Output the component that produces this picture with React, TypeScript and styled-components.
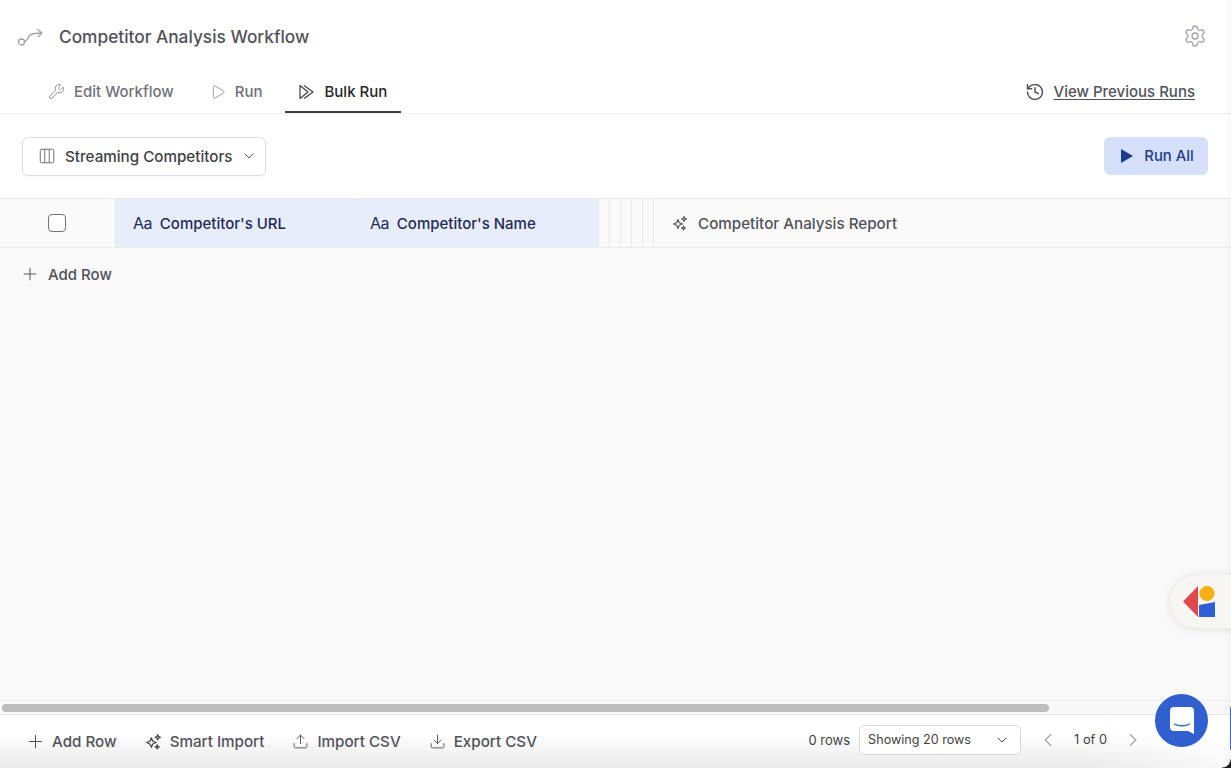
import React from "react";
import styled, { createGlobalStyle } from "styled-components";
import { ChevronDown, ChevronLeft, ChevronRight, Columns3, Download, History, Play, Plus, Settings, Upload, Wrench } from "lucide-react";

const GlobalStyle = createGlobalStyle`
  html, body { margin: 0; padding: 0; height: 100%; background: #fff; }
  body { font-family: "Inter", "Liberation Sans", sans-serif; overflow: hidden; }
  #root { height: 100%; }
`;

const Page = styled.div`
  position: relative;
  height: 768px;
  display: flex;
  flex-direction: column;
  overflow: hidden;
  background: #fff;
`;

const TitleRow = styled.div`
  height: 70px;
  flex: none;
  box-sizing: border-box;
  display: flex;
  align-items: center;
  padding: 2px 24px 0 17px;
  gap: 15px;
  color: #52525b;
`;

const Title = styled.h1`
  margin: 0;
  flex: 1;
  font-size: 17.3px;
  font-weight: 500;
  color: #52525b;
`;

const TabRow = styled.div`
  height: 44px;
  flex: none;
  box-sizing: border-box;
  display: flex;
  align-items: stretch;
  padding: 0 36px 0 34.5px;
  border-bottom: 1px solid #efefef;
`;

const Tab = styled.div<{ $active?: boolean }>`
  display: flex;
  align-items: center;
  gap: 9px;
  height: 43px;
  padding: 2px 13.5px 0;
  box-sizing: border-box;
  font-size: 15px;
  font-weight: 500;
  color: ${(p) => (p.$active ? "#27272a" : "#71717a")};
  border-bottom: 2px solid ${(p) => (p.$active ? "#3f3f46" : "transparent")};
  margin-right: ${(p) => (p.$active ? "0" : "9px")};
`;

const PreviousRuns = styled.div`
  margin-left: auto;
  display: flex;
  align-items: center;
  gap: 9px;
  font-size: 15px;
  font-weight: 500;
  color: #52525b;

  span {
    text-decoration: underline;
    text-underline-offset: 2px;
  }
`;

const Toolbar = styled.div`
  height: 84px;
  flex: none;
  display: flex;
  align-items: center;
  justify-content: space-between;
  padding: 0 23px 0 22px;
`;

const SetPicker = styled.div`
  width: 244px;
  height: 39px;
  box-sizing: border-box;
  display: flex;
  align-items: center;
  padding: 0 8px 0 15px;
  border: 1px solid #dcdcde;
  border-radius: 6px;
  box-shadow: 0 1px 2px rgba(0, 0, 0, 0.04);
  font-size: 15.2px;
  font-weight: 500;
  color: #3f3f46;

  span {
    flex: 1;
    margin-left: 9px;
    white-space: nowrap;
  }
`;

const RunAll = styled.button`
  width: 104px;
  height: 38px;
  display: flex;
  align-items: center;
  justify-content: center;
  gap: 11px;
  padding: 0 0 0 3px;
  border: 0;
  border-radius: 6px;
  background: #d4e0f9;
  color: #1e3a8a;
  font: 500 14.8px "Inter", "Liberation Sans", sans-serif;
`;

const HeaderRow = styled.div`
  height: 50px;
  flex: none;
  box-sizing: border-box;
  display: flex;
  background: #fafafa;
  border-top: 1px solid #e9e9ea;
  border-bottom: 1px solid #ededee;
`;

const CheckCell = styled.div`
  width: 115px;
  flex: none;
  box-sizing: border-box;
  padding-right: 1px;
  display: flex;
  align-items: center;
  justify-content: center;
`;

const Checkbox = styled.div`
  width: 18px;
  height: 18px;
  box-sizing: border-box;
  background: #fff;
  border: 1px solid #71717a;
  border-radius: 4px;
`;

const ColumnCell = styled.div<{ $width: number }>`
  width: ${(p) => p.$width}px;
  flex: none;
  box-sizing: border-box;
  display: flex;
  align-items: center;
  gap: 8px;
  padding-left: 17px;
  background: #e8eef9;
  border-left: 1px solid #e2e7f1;
  color: #1e2a5a;
  font-size: 15px;
  font-weight: 500;
`;

const TypeMark = styled.span`
  font-size: 16px;
  font-weight: 400;
  letter-spacing: -0.6px;
`;

const Sliver = styled.div`
  width: 11px;
  flex: none;
  box-sizing: border-box;
  border-left: 1px solid #e8e8ea;
`;

const ReportCell = styled.div`
  flex: 1;
  display: flex;
  align-items: center;
  gap: 10px;
  padding-left: 18px;
  border-left: 1px solid #e8e8ea;
  color: #52525b;
  font-size: 15.2px;
  font-weight: 500;
`;

const GridBody = styled.div`
  flex: 1;
  background: #f9f9f9;
`;

const InlineAdd = styled.div`
  height: 52px;
  display: flex;
  align-items: center;
  gap: 8px;
  padding-left: 20px;
  color: #52525b;
  font-size: 15px;
  font-weight: 500;
`;

const ScrollTrack = styled.div`
  height: 15px;
  flex: none;
  box-sizing: border-box;
  padding: 3px 2px;
  background: #f8f8f8;
  border-top: 1px solid #eeeeee;
  border-bottom: 1px solid #e8e8e8;
`;

const ScrollThumb = styled.div`
  width: 1047px;
  height: 8px;
  border-radius: 4px;
  background: #bdbdbd;
`;

const Footer = styled.div`
  height: 53px;
  flex: none;
  box-sizing: border-box;
  display: flex;
  align-items: center;
  padding: 0 87px 0 25px;
  background:
    linear-gradient(90deg, rgba(255, 255, 255, 0) 88%, rgba(255, 255, 255, 0.75) 100%),
    linear-gradient(#fff 0%, #fff 35%, #e9e9e9 100%);
`;

const FooterAction = styled.div<{ $gap?: number }>`
  display: flex;
  align-items: center;
  gap: ${(p) => p.$gap ?? 8}px;
  margin-right: 28px;
  color: #52525b;
  font-size: 15.2px;
  font-weight: 500;
`;

const PagingGroup = styled.div`
  margin-left: auto;
  display: flex;
  align-items: center;
  padding-bottom: 4px;
`;

const RowCount = styled.div`
  font-size: 13px;
  color: #3f3f46;
`;

const PageSize = styled.div`
  width: 162px;
  height: 30px;
  box-sizing: border-box;
  margin-left: 9px;
  display: flex;
  align-items: center;
  justify-content: space-between;
  padding: 0 10px 0 8px;
  background: #fff;
  border: 1px solid #d8d8da;
  border-radius: 5px;
  font-size: 12.6px;
  color: #3f3f46;
`;

const Pager = styled.div`
  display: flex;
  align-items: center;
  gap: 15px;
  margin-left: 16px;
  font-size: 12.8px;
  color: #3f3f46;
`;

const ChatButton = styled.div`
  position: absolute;
  left: 1155px;
  top: 694px;
  width: 53px;
  height: 53px;
  display: flex;
  align-items: center;
  justify-content: center;
  border-radius: 50%;
  background: #3060d0;
`;

const Launcher = styled.div`
  position: absolute;
  left: 1170px;
  top: 575px;
  width: 70px;
  height: 53px;
  display: flex;
  align-items: center;
  padding-left: 13px;
  box-sizing: border-box;
  border-radius: 27px 0 0 27px;
  background: #f7f6f3;
  box-shadow: 0 1px 8px rgba(0, 0, 0, 0.1);
`;

const EdgeFade = styled.div`
  position: absolute;
  top: 0;
  right: 0;
  bottom: 0;
  width: 8px;
  background: linear-gradient(90deg, rgba(0, 0, 0, 0), rgba(0, 0, 0, 0.025));
  pointer-events: none;
`;

const EdgeAccent = styled.div`
  position: absolute;
  top: 707px;
  right: 0;
  width: 1px;
  height: 43px;
  background: #3f68cf;
`;

const WindowCorner = styled.div`
  position: absolute;
  right: 0;
  bottom: 0;
  width: 9px;
  height: 9px;
  background: radial-gradient(circle at 0 0, rgba(0, 0, 0, 0) 8px, #1f1f1f 9px);
`;

const RouteIcon = () => (
  <svg width="27" height="24" viewBox="0 0 27 24" fill="none" stroke="#a1a1aa" strokeWidth="1.3" strokeLinecap="round" strokeLinejoin="round">
    <circle cx="4.5" cy="18" r="3" />
    <path d="M7.5 17.5c3.5 0 3.5-7 7.5-7.5 3-.4 4-.5 9-1" />
    <path d="M20.5 5.5 25 9l-3.5 3.5" />
  </svg>
);

const BulkPlay = () => (
  <svg width="17" height="16" viewBox="0 0 17 16" fill="none" stroke="#3f3f46" strokeWidth="1.2" strokeLinejoin="round">
    <path d="M2 1.5v13L10 8z" />
    <path d="M6 1.5 15 8l-9 6.5" />
  </svg>
);

const SolidPlay = () => (
  <svg width="12" height="14" viewBox="0 0 12 14">
    <path d="M0 0l12 7-12 7z" fill="#1e3a8a" />
  </svg>
);

const SparkIcon = ({ size = 16, color = "#52525b" }: { size?: number; color?: string }) => (
  <svg width={size} height={size} viewBox="0 0 16 16" fill="none" stroke={color} strokeWidth="1.1" strokeLinejoin="round">
    <path d="M6 4.5 7.3 7.7 10.5 9 7.3 10.3 6 13.5 4.7 10.3 1.5 9 4.7 7.7z" />
    <path d="M12 1.5 12.7 3.3 14.5 4 12.7 4.7 12 6.5 11.3 4.7 9.5 4 11.3 3.3z" />
    <path d="M11.5 11 12.1 12.4 13.5 13 12.1 13.6 11.5 15 10.9 13.6 9.5 13 10.9 12.4z" />
  </svg>
);

const ChatGlyph = () => (
  <svg width="24" height="27" viewBox="0 0 24 27">
    <path d="M4 0h16a4 4 0 0 1 4 4v23l-6-3H4a4 4 0 0 1-4-4V4a4 4 0 0 1 4-4z" fill="#fff" />
    <path d="M4.5 17c4 2.4 11 2.4 15 0" fill="none" stroke="#3060d0" strokeWidth="1.4" strokeLinecap="round" />
  </svg>
);

const LauncherLogo = () => (
  <svg width="33" height="32" viewBox="0 0 33 32">
    <path d="M15 0v31L0 15.5z" fill="#e0484f" />
    <circle cx="24" cy="7.5" r="7.6" fill="#f5b014" />
    <path d="M16 19l16-3v15H16z" fill="#2f5fd6" />
  </svg>
);

export default function App() {
  return (
    <Page>
      <GlobalStyle />
      <TitleRow>
        <RouteIcon />
        <Title>Competitor Analysis Workflow</Title>
        <Settings size={24} color="#a1a1aa" strokeWidth={1.3} />
      </TitleRow>
      <TabRow>
        <Tab>
          <Wrench size={17} color="#8a8a92" strokeWidth={1.3} />
          Edit Workflow
        </Tab>
        <Tab>
          <Play size={16} color="#8a8a92" strokeWidth={1.3} />
          Run
        </Tab>
        <Tab $active>
          <BulkPlay />
          Bulk Run
        </Tab>
        <PreviousRuns>
          <History size={20} color="#52525b" strokeWidth={1.8} />
          <span>View Previous Runs</span>
        </PreviousRuns>
      </TabRow>
      <Toolbar>
        <SetPicker>
          <Columns3 size={18} color="#71717a" strokeWidth={1.3} />
          <span>Streaming Competitors</span>
          <ChevronDown size={16} color="#52525b" strokeWidth={1.5} />
        </SetPicker>
        <RunAll>
          <SolidPlay />
          Run All
        </RunAll>
      </Toolbar>
      <HeaderRow>
        <CheckCell>
          <Checkbox />
        </CheckCell>
        <ColumnCell $width={237}>
          <TypeMark>Aa</TypeMark>
          Competitor's URL
        </ColumnCell>
        <ColumnCell $width={246}>
          <TypeMark>Aa</TypeMark>
          Competitor's Name
        </ColumnCell>
        <Sliver />
        <Sliver />
        <Sliver />
        <Sliver />
        <Sliver />
        <ReportCell>
          <SparkIcon />
          Competitor Analysis Report
        </ReportCell>
      </HeaderRow>
      <GridBody>
        <InlineAdd>
          <Plus size={20} color="#52525b" strokeWidth={1.2} />
          Add Row
        </InlineAdd>
      </GridBody>
      <ScrollTrack>
        <ScrollThumb />
      </ScrollTrack>
      <Footer>
        <FooterAction $gap={6}>
          <Plus size={21} color="#52525b" strokeWidth={1.2} />
          Add Row
        </FooterAction>
        <FooterAction>
          <SparkIcon size={17} color="#3f3f46" />
          Smart Import
        </FooterAction>
        <FooterAction>
          <Upload size={17} color="#52525b" strokeWidth={1.3} />
          Import CSV
        </FooterAction>
        <FooterAction>
          <Download size={17} color="#52525b" strokeWidth={1.3} />
          Export CSV
        </FooterAction>
        <PagingGroup>
          <RowCount>0 rows</RowCount>
          <PageSize>
            Showing 20 rows
            <ChevronDown size={16} color="#52525b" strokeWidth={1.5} />
          </PageSize>
          <Pager>
            <ChevronLeft size={22} color="#a1a1aa" strokeWidth={1.2} />
            1 of 0
            <ChevronRight size={22} color="#a1a1aa" strokeWidth={1.2} />
          </Pager>
        </PagingGroup>
      </Footer>
      <EdgeFade />
      <EdgeAccent />
      <WindowCorner />
      <Launcher>
        <LauncherLogo />
      </Launcher>
      <ChatButton>
        <ChatGlyph />
      </ChatButton>
    </Page>
  );
}
